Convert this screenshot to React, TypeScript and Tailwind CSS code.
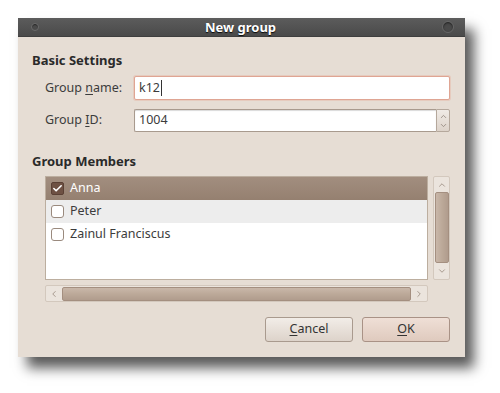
import { Check, ChevronDown, ChevronLeft, ChevronRight, ChevronUp } from "lucide-react";

const members = [
  { name: "Anna", checked: true },
  { name: "Peter", checked: false },
  { name: "Zainul Franciscus", checked: false },
];

const font = { fontFamily: '"Noto Sans", "DejaVu Sans", sans-serif' };

const Mnemonic = ({ text, at }: { text: string; at: number }) => (
  <>
    {text.slice(0, at)}
    <span className="underline underline-offset-2">{text[at]}</span>
    {text.slice(at + 1)}
  </>
);

const App = () => {
  return (
    <div className="w-[500px] h-[393px] bg-white pt-[18px] pl-[18px]" style={font}>
      <div className="w-[447px] h-[339px] flex flex-col bg-[#e6ddd4] shadow-[9px_11px_12px_rgba(0,0,0,0.65)]">
        {/* title bar */}
        <div className="h-[19px] flex items-center justify-between px-[13px] bg-gradient-to-b from-[#5c5c5c] to-[#4a4a4a] border-b border-[#3e3e3e]">
          <span className="w-[8px] h-[8px] rounded-full bg-[#4a4a4a] border border-[#6a6a6a] shadow-[inset_0_1px_1px_rgba(0,0,0,0.6)]" />
          <span className="text-[13px] font-bold text-white [text-shadow:0_1px_1px_rgba(0,0,0,0.9)] leading-none">New group</span>
          <span className="w-[12px] h-[12px] rounded-full bg-[#4a4a4a] border border-[#666] shadow-[inset_0_1px_2px_rgba(0,0,0,0.6)] -mr-[2px]" />
        </div>

        <div className="flex flex-col pl-[14px] pr-[15px] pt-[13px] text-[12.5px] text-[#3c3c3c]">
          <div className="h-[20px] leading-[20px] text-[13px] font-bold text-[#2a2a2a]">Basic Settings</div>

          <div className="flex items-center mt-[6px] pl-[13px]">
            <span className="w-[89px]">
              <Mnemonic text="Group name:" at={6} />
            </span>
            <div className="flex-1 h-[24px] bg-white border border-[#dfa593] rounded-[2px] flex items-center px-[4px] shadow-[0_0_0_1px_rgba(230,170,150,0.35)]">
              <span>k12</span>
              <span className="w-px h-[16px] bg-[#333] ml-px" />
            </div>
          </div>

          <div className="flex items-center mt-[9px] pl-[13px]">
            <span className="w-[89px]">
              <Mnemonic text="Group ID:" at={6} />
            </span>
            <div className="flex-1 h-[23px] flex">
              <div className="flex-1 bg-white border border-[#a89a8e] border-r-0 rounded-l-[2px] flex items-center px-[4px] shadow-[inset_0_1px_1px_rgba(0,0,0,0.15)]">
                1004
              </div>
              <div className="w-[14px] flex flex-col items-center justify-center border border-[#b5a89c] rounded-r-[2px] bg-gradient-to-b from-[#f0ebe6] to-[#ddd3ca] text-[#8a7e74]">
                <ChevronUp size={9} strokeWidth={2} />
                <ChevronDown size={9} strokeWidth={2} />
              </div>
            </div>
          </div>

          <div className="h-[20px] leading-[20px] text-[13px] font-bold text-[#2a2a2a] mt-[19px]">Group Members</div>

          <div className="flex mt-[5px] pl-[13px] gap-[5px]">
            <div className="flex-1 h-[104px] bg-white border border-[#bcae9f] flex flex-col">
              {members.map((m, i) => (
                <div
                  key={m.name}
                  className={
                    i === 0
                      ? "h-[23px] flex items-center gap-[6px] px-[5px] bg-gradient-to-b from-[#a28e7f] to-[#958070] text-white"
                      : i === 1
                      ? "h-[23px] flex items-center gap-[6px] px-[5px] bg-[#ededed]"
                      : "h-[23px] flex items-center gap-[6px] px-[5px]"
                  }
                >
                  {m.checked ? (
                    <span className="w-[13px] h-[13px] rounded-[2px] bg-[#6e5143] border border-[#5a4034] flex items-center justify-center">
                      <Check size={11} strokeWidth={3.5} className="text-white" />
                    </span>
                  ) : (
                    <span className="w-[13px] h-[13px] rounded-[3px] bg-white border border-[#9a8a7e]" />
                  )}
                  <span>{m.name}</span>
                </div>
              ))}
            </div>
            <div className="w-[17px] h-[104px] flex flex-col items-center bg-[#ebe4dd] border border-[#d3c8bd] rounded-[2px]">
              <div className="h-[15px] flex items-center text-[#9a8c80]">
                <ChevronUp size={10} strokeWidth={2} />
              </div>
              <div className="w-[14px] h-[71px] rounded-[2px] border border-[#a48f80] bg-gradient-to-r from-[#c9b7a9] via-[#bca999] to-[#b09c8d]" />
              <div className="flex-1 flex items-center text-[#9a8c80]">
                <ChevronDown size={10} strokeWidth={2} />
              </div>
            </div>
          </div>

          <div className="flex mt-[5px] pl-[13px] pr-[22px]">
            <div className="flex-1 h-[17px] flex items-center bg-[#ebe4dd] border border-[#d3c8bd] rounded-[2px]">
              <div className="w-[16px] flex justify-center text-[#9a8c80]">
                <ChevronLeft size={10} strokeWidth={2} />
              </div>
              <div className="flex-1 h-[14px] rounded-[2px] border border-[#a48f80] bg-gradient-to-b from-[#c9b7a9] via-[#bca999] to-[#b09c8d]" />
              <div className="w-[16px] flex justify-center text-[#9a8c80]">
                <ChevronRight size={10} strokeWidth={2} />
              </div>
            </div>
          </div>

          <div className="flex justify-end gap-[9px] mt-[15px]">
            <button className="w-[88px] h-[25px] rounded-[3px] border border-[#a99a8e] bg-gradient-to-b from-[#f2ede8] to-[#ddd3ca] text-[#333] text-[12.5px]">
              <Mnemonic text="Cancel" at={0} />
            </button>
            <button className="w-[88px] h-[25px] rounded-[3px] border border-[#a99286] bg-gradient-to-b from-[#efdfd6] to-[#dfcabe] text-[#333] text-[12.5px]">
              <Mnemonic text="OK" at={0} />
            </button>
          </div>
        </div>
      </div>
    </div>
  );
};

export default App;
